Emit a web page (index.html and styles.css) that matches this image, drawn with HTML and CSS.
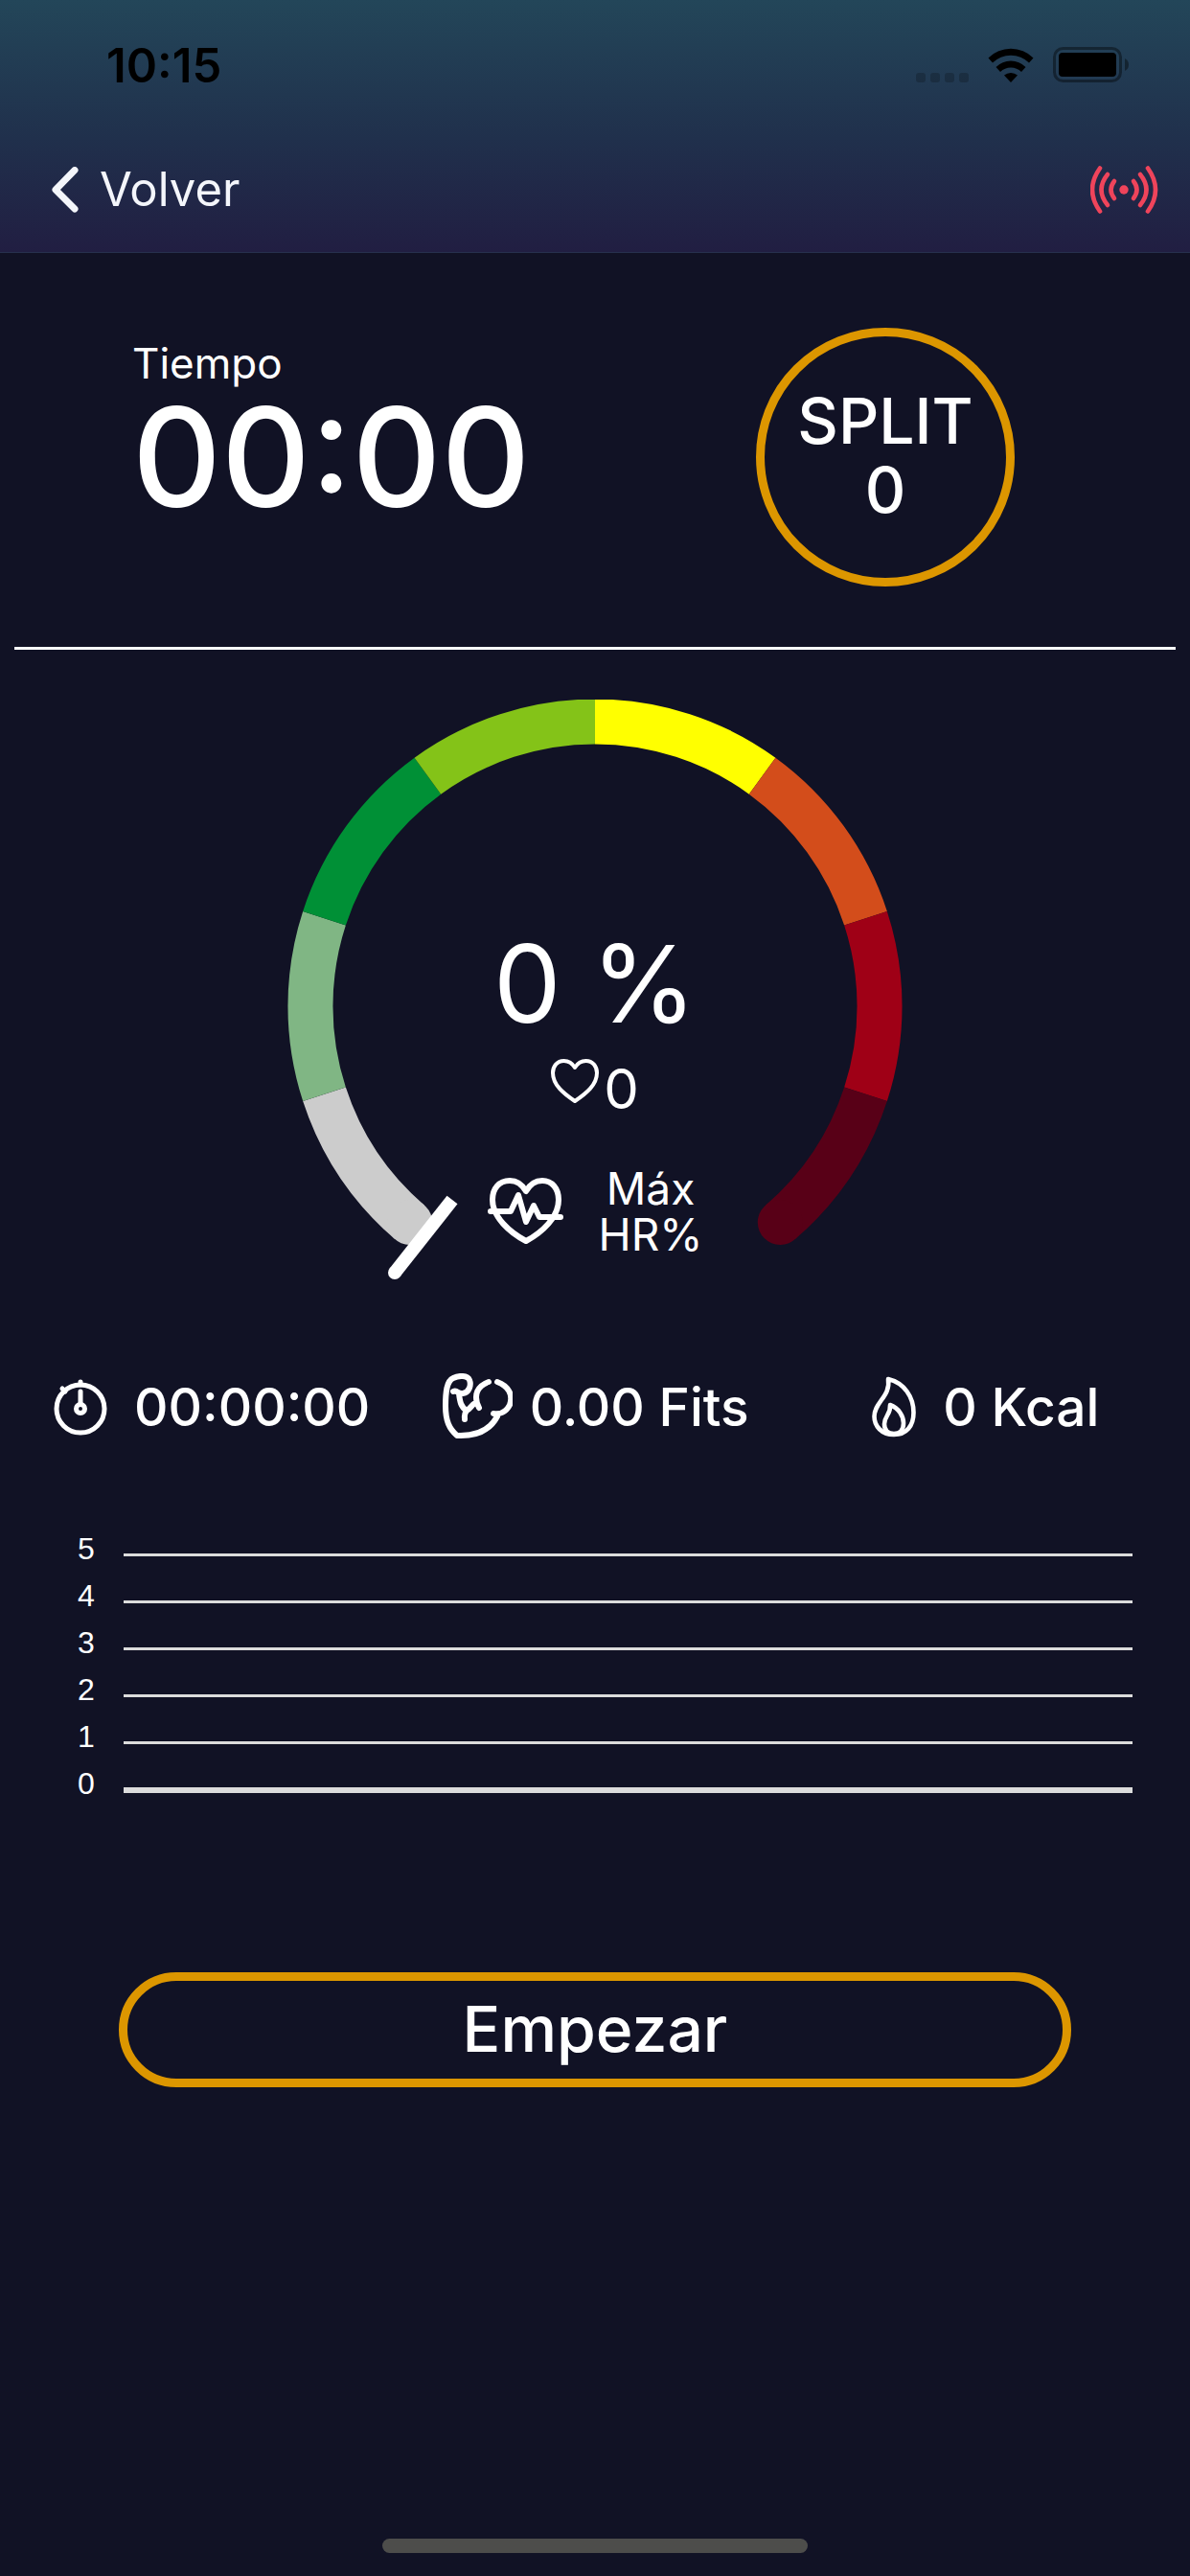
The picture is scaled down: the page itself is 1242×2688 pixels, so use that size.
FILE: index.html
```html
<!DOCTYPE html>
<html lang="es">

<head>
    <meta charset="UTF-8" />
    <meta name="viewport" content="width=device-width, initial-scale=1.0" />
    <title>Entrenamiento</title>
    <link rel="stylesheet" href="styles.css">
</head>

<body>
    <header class="header">
        <div class="status-bar">
            <div class="clock">10:15</div>
            <div class="status-icons">
                <svg class="dots" viewBox="0 0 55 36">
                    <rect x="0" y="26" width="10" height="10" rx="3" />
                    <rect x="15" y="26" width="10" height="10" rx="3" />
                    <rect x="30" y="26" width="10" height="10" rx="3" />
                    <rect x="45" y="26" width="10" height="10" rx="3" />
                </svg>
                <svg class="wifi" viewBox="0 0 48 36">
                    <path d="M0.500 10.500A33.500 33.500 0 0 1 47.500 10.500L43 15.500A27 27 0 0 0 5 15.500Z" />
                    <path d="M8.500 20A22 22 0 0 1 39.500 20L35 25A15.500 15.500 0 0 0 13 25Z" />
                    <path d="M17 28.500A11 11 0 0 1 31 28.500L24 36Z" />
                </svg>
                <svg class="battery" viewBox="0 0 80 38">
                    <rect x="1.500" y="1.500" width="69" height="34" rx="9" fill="none" stroke="#000" stroke-opacity="0.4" stroke-width="3" />
                    <rect x="6" y="6" width="60" height="25" rx="4" />
                    <path d="M75 12Q79 14 79 18.500Q79 23 75 25Z" fill-opacity="0.4" />
                </svg>
            </div>
        </div>
        <nav class="nav-bar">
            <a class="back" href="#">
                <svg class="chevron" viewBox="0 0 28 48">
                    <path d="M24 3.500L4 24L24 44" fill="none" stroke="#f4f6fb" stroke-width="7" stroke-linecap="round" stroke-linejoin="round" />
                </svg>
                Volver
            </a>
            <button class="signal" type="button" aria-label="Sensor">
                <svg viewBox="0 0 72 50" fill="none" stroke="#ef445b" stroke-width="4.600" stroke-linecap="round">
                    <circle cx="35" cy="25" r="4.700" fill="#ef445b" stroke="none" />
                    <path d="M25 16Q18 25 25 34M45 16Q52 25 45 34" />
                    <path d="M18 9Q5 25 18 41M52 9Q65 25 52 41" />
                    <path d="M10 2.500Q-6 25 10 47.500M60 2.500Q76 25 60 47.500" />
                </svg>
            </button>
        </nav>
    </header>

    <main>
        <section class="timer">
            <div class="time">
                <div class="time-label">Tiempo</div>
                <div class="time-value">00:00</div>
            </div>
            <button class="split" type="button">SPLIT<br>0</button>
        </section>

        <!-- zonas de frecuencia cardiaca, 36 grados cada una -->
        <section class="gauge">
            <svg class="dial" viewBox="0 0 660 620" fill="none" stroke-width="47">
                <path d="M47.500 411.800A297 297 0 0 0 136.700 545.500" stroke="#cccccc" />
                <circle cx="136.700" cy="545.500" r="23.500" fill="#cccccc" stroke="none" />
                <path d="M47.500 411.800A297 297 0 0 1 47.500 228.200" stroke="#80b684" />
                <path d="M47.500 228.200A297 297 0 0 1 155.400 79.700" stroke="#009036" />
                <path d="M155.400 79.700A297 297 0 0 1 330 23" stroke="#84c318" />
                <path d="M330 23A297 297 0 0 1 504.600 79.700" stroke="#ffff00" />
                <path d="M504.600 79.700A297 297 0 0 1 612.500 228.200" stroke="#d34d1b" />
                <path d="M612.500 228.200A297 297 0 0 1 612.500 411.800" stroke="#9f0016" />
                <path d="M612.500 411.800A297 297 0 0 1 523.300 545.500" stroke="#580017" />
                <circle cx="523.300" cy="545.500" r="23.500" fill="#580017" stroke="none" />
                <path d="M181 522L121 598" stroke="#fff" stroke-width="14" />
                <circle cx="121" cy="598" r="7" fill="#fff" stroke="none" />
            </svg>
            <div class="readout">
                <div class="percent">0 %</div>
                <div class="pulse">
                    <svg class="heart" viewBox="0 0 50 46">
                        <path d="M25 9C22 4 18 2 13.500 2C6.500 2 2 7.500 2 14.500C2 27 13 36 25 44C37 36 48 27 48 14.500C48 7.500 43.500 2 36.500 2C32 2 28 4 25 9Z" fill="none" stroke="#fff" stroke-width="4" stroke-linejoin="round" />
                    </svg>
                    <span>0</span>
                </div>
                <div class="max-hr">
                    <svg class="heart-rate" viewBox="0 0 80 70" fill="none" stroke="#fff" stroke-width="6" stroke-linecap="round" stroke-linejoin="round">
                        <path d="M40 14C36 7 30 3 23 3C12 3 5 11 5 23C5 41 23 57 40 66C57 57 74 41 74 23C74 11 67 3 57 3C50 3 44 7 40 14Z" />
                        <path d="M3 35H24L32 18L40 46L48 29L54 41H76" />
                    </svg>
                    <span>Máx<br>HR%</span>
                </div>
            </div>
        </section>

        <section class="stats">
            <div class="stat">
                <svg class="stopwatch" viewBox="0 0 56 60" fill="none" stroke="#fff">
                    <circle cx="28" cy="32" r="25" stroke-width="5" />
                    <circle cx="28" cy="32" r="4.500" stroke-width="5" />
                    <path d="M28 14V27M28 4V7M9 11L12 14" stroke-width="5" stroke-linecap="round" />
                </svg>
                00:00:00
            </div>
            <div class="stat fits">
                <svg class="muscle" viewBox="0 0 74 70" fill="none" stroke="#fff" stroke-width="6" stroke-linecap="round" stroke-linejoin="round">
                    <path d="M12 19C17 17 16 22 22 21C29 20 31 12 29 7C27 2 18 2 12 5C5 8 4 20 4 34C4 50 8 58 16 65C36 66 50 60 58 45M54 42C60 43 67 41 71 33C75 22 69 13 58 9M49 9C38 13 32 22 39 36M35 31C31 33 29 38 26 39C20 35 19 30 18 21M26 39C23 43 24 44 24 48" />
                </svg>
                0.00 Fits
            </div>
            <div class="stat">
                <svg class="flame" viewBox="0 0 46 64" fill="none" stroke="#fff" stroke-width="4.600" stroke-linejoin="round">
                    <path d="M17 3C34 7 43.500 22 43.500 38C43.500 52 36 61 23 61C10 61 2.500 52 2.500 42C2.500 27 20 21 17 3Z" />
                    <path d="M19 30C28 33 33 42 33 49C33 56 29 60 23 60C17 60 13 56 13 50C13 41 20 40 19 30Z" />
                </svg>
                0 Kcal
            </div>
        </section>

        <section class="chart">
            <div class="row"><span>5</span><i></i></div>
            <div class="row"><span>4</span><i></i></div>
            <div class="row"><span>3</span><i></i></div>
            <div class="row"><span>2</span><i></i></div>
            <div class="row"><span>1</span><i></i></div>
            <div class="row base"><span>0</span><i></i></div>
        </section>

        <button class="start" type="button">Empezar</button>
    </main>

    <div class="home-indicator"></div>
</body>

</html>
```
FILE: styles.css
```css
* {
    box-sizing: border-box;
}

body {
    display: flex;
    flex-direction: column;
    min-height: 100vh;
    margin: 0;
    background: #111225;
    color: #fff;
    font-family: Inter, Roboto, sans-serif;
}

button {
    font-family: inherit;
    color: inherit;
    background: none;
    border: none;
    padding: 0;
}

svg {
    display: block;
    flex: none;
}

main {
    flex: 1;
    display: flex;
    flex-direction: column;
}

.header {
    background: linear-gradient(#234659, #20304c 55%, #211e42);
    border-bottom: 1px solid #26304d;
}

.status-bar {
    display: flex;
    justify-content: space-between;
    align-items: center;
    height: 132px;
    padding: 4px 63px 0 111px;
    color: #000;
}

.clock {
    font-size: 49px;
    font-weight: 600;
}

.status-icons {
    display: flex;
    align-items: center;
    gap: 20px;
}

.dots {
    width: 55px;
    height: 36px;
    opacity: 0.2;
}

.wifi {
    width: 48px;
    height: 36px;
}

.battery {
    width: 80px;
    height: 38px;
}

.nav-bar {
    display: flex;
    justify-content: space-between;
    align-items: center;
    height: 131px;
    padding: 0 32px 0 54px;
}

.back {
    display: flex;
    align-items: center;
    gap: 22px;
    color: #f4f6fb;
    font-size: 49px;
    text-decoration: none;
}

.chevron {
    width: 28px;
    height: 48px;
}

.signal svg {
    width: 72px;
    height: 50px;
}

.timer {
    display: flex;
    justify-content: space-between;
    align-items: flex-start;
    margin: 0 15px;
    padding: 78px 168px 63px 123px;
    border-bottom: 3px solid #fff;
}

.time {
    padding-top: 7px;
}

.time-label {
    font-size: 44px;
    line-height: 60px;
}

.time-value {
    font-size: 144px;
    font-weight: 500;
    line-height: 136px;
}

.split {
    width: 270px;
    height: 270px;
    padding-bottom: 4px;
    border: 9px solid #dc9600;
    border-radius: 50%;
    font-size: 66px;
    font-weight: 500;
    line-height: 72px;
}

.gauge {
    display: grid;
    justify-content: center;
    padding-top: 52px;
}

.dial,
.readout {
    grid-area: 1 / 1;
}

.dial {
    width: 660px;
    height: 620px;
}

.readout {
    display: flex;
    flex-direction: column;
    align-items: center;
    padding-top: 236px;
}

.percent {
    font-size: 112px;
    line-height: 120px;
}

.pulse {
    display: flex;
    align-items: center;
    gap: 5px;
    margin-top: 10px;
    font-size: 58px;
    line-height: 80px;
}

.heart {
    width: 50px;
    height: 46px;
    margin-bottom: 16px;
}

.max-hr {
    display: flex;
    align-items: center;
    gap: 36px;
    margin-top: 40px;
    font-size: 46px;
    line-height: 48px;
    text-align: center;
}

.heart-rate {
    width: 80px;
    height: 70px;
}

.stats {
    display: grid;
    grid-template-columns: 27fr 30fr 16fr;
    padding: 82px 92px 0 56px;
}

.stat {
    display: flex;
    align-items: center;
    gap: 28px;
    height: 72px;
    font-size: 55px;
    font-weight: 500;
    white-space: nowrap;
}

.fits {
    gap: 18px;
}

.stopwatch {
    width: 56px;
    height: 60px;
}

.muscle {
    width: 74px;
    height: 70px;
}

.flame {
    width: 46px;
    height: 64px;
}

.chart {
    padding: 88px 60px 0 81px;
    font-family: "Liberation Sans", Arial, sans-serif;
    font-size: 32px;
}

.row {
    display: grid;
    grid-template-columns: 18px 1fr;
    column-gap: 30px;
    height: 49px;
    line-height: 49px;
}

.row i {
    align-self: center;
    height: 3px;
    margin-top: 12px;
    background: #dcdcdc;
}

.base i {
    height: 6px;
}

.start {
    margin: 172px 124px 0;
    height: 120px;
    padding-bottom: 2px;
    border: 9px solid #dc9600;
    border-radius: 60px;
    font-size: 66px;
    font-weight: 500;
}

.home-indicator {
    align-self: center;
    width: 444px;
    height: 15px;
    margin-bottom: 24px;
    border-radius: 8px;
    background: #4d4d4b;
}
```
